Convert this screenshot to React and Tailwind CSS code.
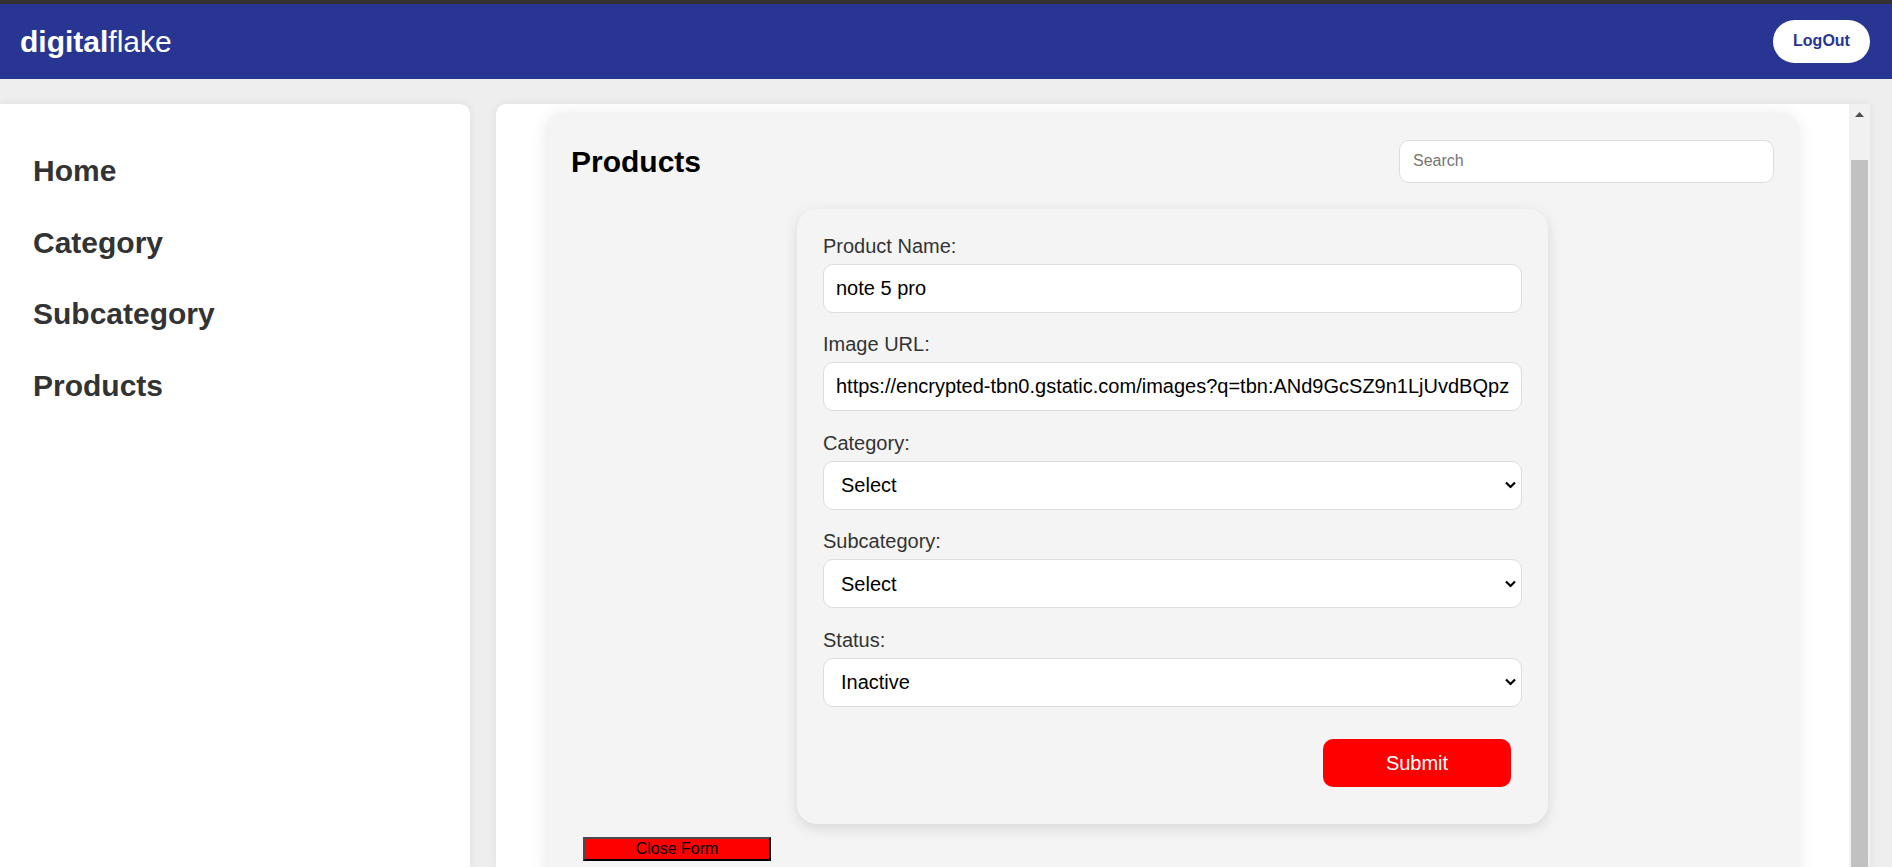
import { useState } from 'react';

const navItems = ['Home', 'Category', 'Subcategory', 'Products'];

function Chevron() {
    return (
        <svg width="11" height="7" viewBox="0 0 11 7" className="absolute right-[6px] top-1/2 -translate-y-1/2 pointer-events-none">
            <polyline points="1,1 5.5,5.5 10,1" fill="none" stroke="#000" strokeWidth="2.2" />
        </svg>
    );
}

function Field({ label, children }) {
    return (
        <div className="mb-[20.5px]">
            <label className="block text-[20px] leading-[23px] text-[#333333] mb-[6px]">{label}</label>
            {children}
        </div>
    );
}

function SelectBox({ value, options }) {
    return (
        <div className="relative">
            <select
                defaultValue={value}
                className="w-full h-[49px] appearance-none rounded-[10px] border border-[#dddddd] bg-white pl-[17px] pr-[24px] text-[20px] text-black outline-none"
            >
                {options.map((o) => (
                    <option key={o}>{o}</option>
                ))}
            </select>
            <Chevron />
        </div>
    );
}

export default function App() {
    const [name, setName] = useState('note 5 pro');
    const [url, setUrl] = useState('https://encrypted-tbn0.gstatic.com/images?q=tbn:ANd9GcSZ9n1LjUvdBQpz');

    return (
        <div className="h-screen flex flex-col bg-[#eeeeee] overflow-hidden font-['Liberation_Sans',Arial,sans-serif]">
            <div className="h-[4px] bg-[#333333] shrink-0" />
            <header className="h-[74.5px] shrink-0 bg-[#283593] flex items-center justify-between pl-[20px] pr-[22px]">
                <div className="text-white text-[30px] leading-normal">
                    <span className="font-bold">digital</span>flake
                </div>
                <button className="w-[97px] h-[43px] rounded-full bg-white text-[#283593] font-bold text-[16px]">
                    LogOut
                </button>
            </header>

            <div className="flex-1 min-h-0 flex gap-[26px] pt-[25px] pr-[22px]">
                <aside className="w-[470px] shrink-0 bg-white rounded-tr-[10px] shadow-[0_0_10px_rgba(0,0,0,0.07)] pt-[31px]">
                    {navItems.map((item) => (
                        <div key={item} className="h-[71.7px] flex items-center pl-[33px] text-[30px] font-bold text-[#333333] leading-normal">
                            {item}
                        </div>
                    ))}
                </aside>

                <main className="flex-1 min-w-0 flex bg-white rounded-tl-[10px] rounded-tr-[4px] overflow-hidden shadow-[0_0_10px_rgba(0,0,0,0.07)]">
                    <div className="flex-1 min-w-0 px-[49px] pt-[9px] overflow-hidden">
                        <div className="bg-[#f4f4f4] rounded-[20px] px-[26px] pt-[26px] pb-[30px] shadow-[0_0_16px_rgba(0,0,0,0.08)]">
                            <div className="flex items-center justify-between">
                                <h2 className="text-[30px] font-bold text-black leading-normal">Products</h2>
                                <input
                                    placeholder="Search"
                                    className="w-[375px] h-[43px] rounded-[10px] border border-[#dddddd] bg-white px-[13px] text-[16px] text-black placeholder:text-[#757575] outline-none"
                                />
                            </div>

                            <div className="w-[751px] mx-auto mt-[25px] bg-[#f4f4f4] rounded-[20px] px-[26px] pt-[26px] pb-[37px] shadow-[0_4px_14px_rgba(0,0,0,0.12)]">
                                <Field label="Product Name:">
                                    <input
                                        value={name}
                                        onChange={(e) => setName(e.target.value)}
                                        className="w-full h-[49px] rounded-[10px] border border-[#dddddd] bg-white px-[12px] text-[20px] text-black outline-none"
                                    />
                                </Field>
                                <Field label="Image URL:">
                                    <input
                                        value={url}
                                        onChange={(e) => setUrl(e.target.value)}
                                        className="w-full h-[49px] rounded-[10px] border border-[#dddddd] bg-white px-[12px] text-[20px] text-black outline-none"
                                    />
                                </Field>
                                <Field label="Category:">
                                    <SelectBox value="Select" options={['Select']} />
                                </Field>
                                <Field label="Subcategory:">
                                    <SelectBox value="Select" options={['Select']} />
                                </Field>
                                <Field label="Status:">
                                    <SelectBox value="Inactive" options={['Active', 'Inactive']} />
                                </Field>
                                <div className="flex justify-end pr-[11px] mt-[32px]">
                                    <button className="w-[188px] h-[48px] rounded-[10px] bg-[#ff0000] text-white text-[20px]">
                                        Submit
                                    </button>
                                </div>
                            </div>

                            <button className="mt-[13px] ml-[12px] w-[188px] h-[24px] bg-[#ff0000] text-black text-[16px] leading-none border-2 border-t-[#4a4a4a] border-l-[#4a4a4a] border-r-black border-b-black">
                                Close Form
                            </button>
                        </div>
                    </div>

                    <div className="w-[21px] shrink-0 bg-[#f1f1f1] flex flex-col">
                        <div className="h-[22px] flex items-center justify-center">
                            <svg width="9" height="5" viewBox="0 0 9 5">
                                <polygon points="4.5,0 9,5 0,5" fill="#505050" />
                            </svg>
                        </div>
                        <div className="h-[34px]" />
                        <div className="flex-1 mx-[2px] bg-[#c1c1c1]" />
                    </div>
                </main>
            </div>
        </div>
    );
}
